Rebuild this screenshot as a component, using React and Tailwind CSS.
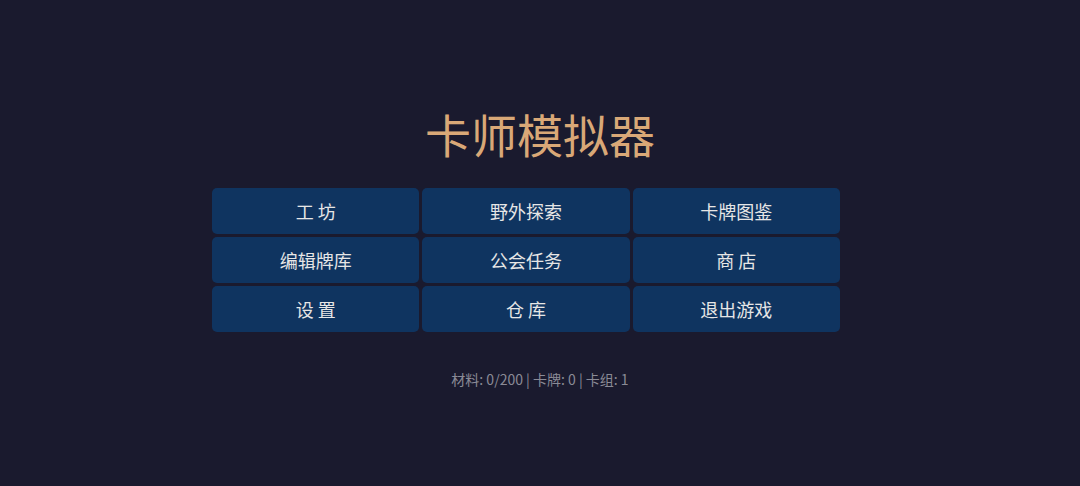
const buttons = ['工 坊', '野外探索', '卡牌图鉴', '编辑牌库', '公会任务', '商 店', '设 置', '仓 库', '退出游戏'];

export default function App() {
  return (
    <div
      className="w-[1080px] h-[486px] bg-[#1a1a2e] flex flex-col items-center pt-[107px]"
      style={{ fontFamily: '"Noto Sans CJK SC", "Noto Sans", sans-serif' }}
    >
      <h1 className="text-[46px] leading-[52px] text-[#d9a877]">卡师模拟器</h1>
      <div className="mt-[29px] mr-[28px] w-[628px] grid grid-cols-3 gap-[3px]">
        {buttons.map((label) => (
          <button
            key={label}
            className="h-[46px] rounded-[5px] bg-[#0f3460] text-[#e6e6e6] text-[18px] flex items-center justify-center"
          >
            {label}
          </button>
        ))}
      </div>
      <div className="mt-[37px] text-[14px] leading-[20px] text-[#8a8a96]">材料: 0/200 | 卡牌: 0 | 卡组: 1</div>
    </div>
  );
}
